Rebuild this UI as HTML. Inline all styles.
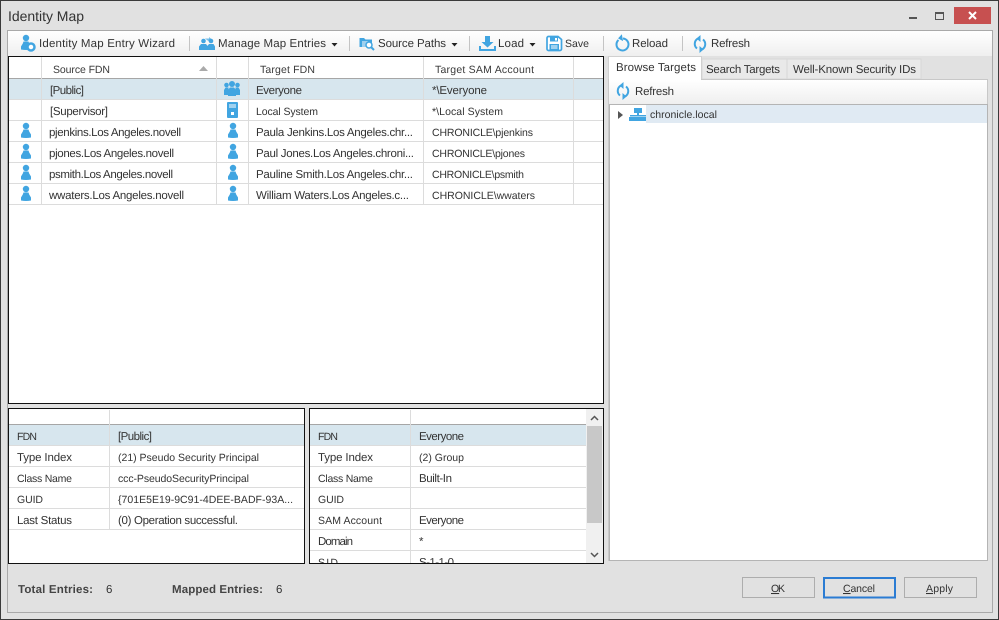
<!DOCTYPE html>
<html><head><meta charset="utf-8"><title>Identity Map</title>
<style>
html,body{margin:0;padding:0;background:#e1e1e1;overflow:hidden}
svg{display:block}
text{font-family:"Liberation Sans",sans-serif;font-size:11.5px;fill:#333;text-rendering:geometricPrecision}
text.s{font-size:10.5px}
.b{font-weight:bold;fill:#444}
.h{fill:#3a3a3a}
</style></head><body>
<svg width="999" height="620" viewBox="0 0 999 620" xmlns="http://www.w3.org/2000/svg">
<defs>
<linearGradient id="tb" x1="0" y1="0" x2="0" y2="1"><stop offset="0" stop-color="#fff"/><stop offset="1" stop-color="#efefef"/></linearGradient>
<symbol id="p" overflow="visible"><circle cx="0" cy="3" r="3.200" fill="#41a5e1"/><path d="M-2.500 6.500H2.500L3.200 8.500 5 11.500V14.500Q0 15.500-5 14.500V11.500L-3.200 8.500Z" fill="#41a5e1"/></symbol>
<symbol id="rf" overflow="visible"><path d="M3 1.500A6 6 0 0 0 2 11.500" fill="none" stroke="#41a5e1" stroke-width="2"/><path d="M5.500-2V5L1.500 1.500Z" fill="#41a5e1"/><path d="M7 12.500A6 6 0 0 0 8 2.500" fill="none" stroke="#41a5e1" stroke-width="2"/><path d="M4.500 16V9L8.500 12.500Z" fill="#41a5e1"/></symbol>
<clipPath id="c1"><rect x="310" y="409" width="276" height="154"/></clipPath>
</defs>
<rect width="999" height="620" fill="#e1e1e1"/>
<path d="M.5 620V.5H998.500V620" fill="none" stroke="#3a3a3a"/>
<path d="M0 619.500H999" stroke="#3a3a3a"/>
<text x="8" y="21" style="font-size:14px" textLength="76">Identity Map</text>
<rect x="909" y="17" width="8" height="2" fill="#555"/>
<rect x="935.500" y="12.500" width="8" height="7" fill="none" stroke="#555"/><rect x="935" y="12" width="9" height="2" fill="#555"/>
<rect x="954" y="7" width="37" height="17" fill="#c75050"/>
<path d="M969 12L976 19M976 12L969 19" stroke="#fff" stroke-width="2"/>
<rect x="7.500" y="30.500" width="985" height="582" fill="#e1e1e1" stroke="#a9a9a9"/>

<rect x="8" y="31" width="984" height="25" fill="url(#tb)"/>
<g stroke="#c4c4c4"><path d="M189.500 36V51M349.500 36V51M469.500 36V51M603.500 36V51M682.500 36V51"/></g>
<use href="#p" x="26" y="35"/>
<circle cx="31" cy="47" r="3.500" fill="#fff" stroke="#41a5e1" stroke-width="2.500"/>
<g fill="#41a5e1"><circle cx="203.500" cy="41" r="2.300"/><path d="M199 50V46.500L201 44H206L208 46.500V50Z"/><circle cx="211" cy="41" r="2.300"/><path d="M207 50V46.500L209 44H213.500L215 46.500V50Z"/><path d="M205 38.500H209V37L212 39.500 209 41.500Z" opacity=".7"/></g>
<path d="M331.500 43H337.500L334.500 46.500Z" fill="#222"/>
<path d="M359.500 38H364L365.500 39.500H372V47H359.500Z" fill="#41a5e1"/><path d="M362 41H368V47H362Z" fill="#9fd0ee"/>
<circle cx="369" cy="45" r="3" fill="#fff" stroke="#41a5e1" stroke-width="1.500"/><path d="M371 47L374 50" stroke="#41a5e1" stroke-width="2"/>
<path d="M451.500 43H457.500L454.500 46.500Z" fill="#222"/>
<path d="M485 36H490V42H493.500L487.500 47.500 481.500 42H485Z" fill="#41a5e1"/>
<path d="M479 46H481V49H494V46H496V51H479Z" fill="#41a5e1"/>
<path d="M529.500 43H535.500L532.500 46.500Z" fill="#222"/>
<path d="M548.500 36.500H558L561.500 39.500V49A1.500 1.500 0 0 1 560 50.500H548.500A1.500 1.500 0 0 1 547 49V38A1.500 1.500 0 0 1 548.500 36.500Z" fill="#fff" stroke="#41a5e1" stroke-width="1.700"/>
<path d="M550 37H558V41.500H550ZM549.500 44H559V50H549.500Z" fill="#41a5e1"/><rect x="555" y="38" width="2" height="2.500" fill="#fff"/><path d="M551 46H557.500M551 48H557.500" stroke="#fff"/>
<g transform="translate(-1.500 0)"><path d="M620 40A6 6 0 1 0 624.500 38.500" fill="none" stroke="#41a5e1" stroke-width="2"/><path d="M624 34.500V41.500L619.500 38Z" fill="#41a5e1" transform="rotate(-10 622 38)"/></g>
<use href="#rf" x="695" y="37"/>
<text x="39" y="47" textLength="136">Identity Map Entry Wizard</text>
<text x="218" y="47" textLength="108">Manage Map Entries</text>
<text x="378" y="47" textLength="68">Source Paths</text>
<text x="498" y="47" textLength="26">Load</text>
<text class="s" x="565" y="47" textLength="24">Save</text>
<text x="632" y="47" textLength="36">Reload</text>
<text x="711" y="47" textLength="39">Refresh</text>

<rect x="8.500" y="56.500" width="595" height="347" fill="#fff" stroke="#111"/>
<rect x="9" y="79" width="594" height="20" fill="#d7e6ee"/>
<path d="M9 78.500H603" stroke="#a6a6a6"/>
<g stroke="#dcdcdc"><path d="M9 99.500H603M9 120.500H603M9 141.500H603M9 162.500H603M9 183.500H603M9 204.500H603"/>
<path d="M41.500 57V205M216.500 57V205M248.500 57V205M423.500 57V205M573.500 57V205"/></g>
<path d="M199 71H208L203.500 66Z" fill="#aaa"/>
<text class="h s" x="53" y="73" textLength="57">Source FDN</text>
<text class="h s" x="260" y="73" textLength="55">Target FDN</text>
<text class="h s" x="435" y="73" textLength="99">Target SAM Account</text>
<text x="50" y="94" textLength="34">[Public]</text>
<text x="256" y="94" textLength="46">Everyone</text>
<text x="432" y="94" textLength="55">*\Everyone</text>
<text x="50" y="115" textLength="58">[Supervisor]</text>
<text class="s" x="256" y="115" textLength="62">Local System</text>
<text class="s" x="432" y="115" textLength="71">*\Local System</text>
<text x="49" y="136" textLength="132">pjenkins.Los Angeles.novell</text>
<text x="256" y="136" textLength="157">Paula Jenkins.Los Angeles.chr...</text>
<text class="s" x="432" y="136" textLength="101">CHRONICLE\pjenkins</text>
<text x="49" y="157" textLength="125">pjones.Los Angeles.novell</text>
<text x="256" y="157" textLength="158">Paul Jones.Los Angeles.chroni...</text>
<text class="s" x="432" y="157" textLength="93">CHRONICLE\pjones</text>
<text x="49" y="178" textLength="124">psmith.Los Angeles.novell</text>
<text x="256" y="178" textLength="157">Pauline Smith.Los Angeles.chr...</text>
<text class="s" x="432" y="178" textLength="92">CHRONICLE\psmith</text>
<text x="49" y="199" textLength="135">wwaters.Los Angeles.novell</text>
<text x="256" y="199" textLength="153">William Waters.Los Angeles.c...</text>
<text class="s" x="432" y="199" textLength="103">CHRONICLE\wwaters</text>
<g fill="#41a5e1"><circle cx="226.500" cy="85" r="2.300"/><circle cx="237.500" cy="85" r="2.300"/><path d="M224 95V90L225.500 87.500H228.500V95ZM240 95V90L238.500 87.500H235.500V95Z"/><circle cx="232" cy="84" r="3"/><path d="M228 96V90L230 87.500H234L236 90V96Z"/></g>
<rect x="227" y="102" width="11" height="16" rx="1" fill="#41a5e1"/><path d="M229 105H236M229 107H236" stroke="#fff"/><rect x="231" y="112" width="3" height="3" fill="#fff"/>
<use href="#p" x="26" y="123"/><use href="#p" x="26" y="144"/><use href="#p" x="26" y="165"/><use href="#p" x="26" y="186"/>
<use href="#p" x="233" y="123"/><use href="#p" x="233" y="144"/><use href="#p" x="233" y="165"/><use href="#p" x="233" y="186"/>

<rect x="8.500" y="408.500" width="296" height="155" fill="#fff" stroke="#111"/>
<rect x="9" y="425" width="295" height="20" fill="#d7e6ee"/>
<path d="M9 424.500H304" stroke="#a6a6a6"/>
<g stroke="#dcdcdc"><path d="M9 445.500H304M9 466.500H304M9 487.500H304M9 508.500H304M9 529.500H304M109.500 410V530"/></g>
<text class="s" x="17" y="440" textLength="20">FDN</text><text x="118" y="440" textLength="34">[Public]</text>
<text x="17" y="461" textLength="55">Type Index</text><text class="s" x="118" y="461" textLength="141">(21) Pseudo Security Principal</text>
<text class="s" x="17" y="482" textLength="55">Class Name</text><text class="s" x="118" y="482" textLength="131">ccc-PseudoSecurityPrincipal</text>
<text class="s" x="17" y="503" textLength="26">GUID</text><text class="s" x="118" y="503" textLength="175">{701E5E19-9C91-4DEE-BADF-93A...</text>
<text x="17" y="524" textLength="55">Last Status</text><text x="118" y="524" textLength="120">(0) Operation successful.</text>

<rect x="309.500" y="408.500" width="294" height="155" fill="#fff" stroke="#111"/>
<rect x="586" y="409" width="17" height="154" fill="#f0f0f0"/>
<rect x="587" y="426" width="15" height="97" fill="#c8c8c8"/>
<path d="M591 420L594.500 416.500 598 420M591 553L594.500 556.500 598 553" fill="none" stroke="#555" stroke-width="1.500"/>
<rect x="310" y="425" width="276" height="20" fill="#d7e6ee"/>
<path d="M310 424.500H586" stroke="#a6a6a6"/>
<g stroke="#dcdcdc"><path d="M310 445.500H586M310 466.500H586M310 487.500H586M310 508.500H586M310 529.500H586M310 550.500H586M410.500 410V563"/></g>
<g clip-path="url(#c1)">
<text class="s" x="318" y="440" textLength="20">FDN</text><text x="419" y="440" textLength="45">Everyone</text>
<text x="318" y="461" textLength="55">Type Index</text><text class="s" x="419" y="461" textLength="45">(2) Group</text>
<text class="s" x="318" y="482" textLength="55">Class Name</text><text x="419" y="482" textLength="33">Built-In</text>
<text class="s" x="318" y="503" textLength="26">GUID</text>
<text class="s" x="318" y="524" textLength="64">SAM Account</text><text x="419" y="524" textLength="45">Everyone</text>
<text x="318" y="545" textLength="35">Domain</text><text x="419" y="545" textLength="6">*</text>
<text class="s" x="318" y="566" textLength="20">SID</text><text x="419" y="566" textLength="35">S-1-1-0</text>
</g>

<rect x="702" y="59" width="85" height="20" fill="#e9e9e9" stroke="#d8d8d8"/>
<rect x="787" y="59" width="134" height="20" fill="#e9e9e9" stroke="#d8d8d8"/>
<rect x="608.500" y="79.500" width="379" height="481" fill="#fff" stroke="#c8c8c8"/>
<rect x="609" y="56" width="92" height="24" fill="#fff"/>
<path d="M608.500 79V56.500H701.500V79" fill="none" stroke="#d0d0d0"/>
<rect x="609" y="80" width="378" height="24" fill="url(#tb)"/>
<rect x="609.500" y="104.500" width="378" height="456" fill="#fff" stroke="#b4b4b4"/>
<rect x="646" y="105" width="341" height="18" fill="#e0eaf3"/>
<text x="616" y="71" textLength="80">Browse Targets</text>
<text x="706" y="73" textLength="74">Search Targets</text>
<text x="793" y="73" textLength="123">Well-Known Security IDs</text>
<use href="#rf" x="618" y="84"/>
<text x="635" y="95" textLength="39">Refresh</text>
<path d="M618 111L623 115 618 119Z" fill="#555"/>
<g fill="#41a5e1"><rect x="634" y="108" width="8" height="5"/><rect x="637" y="113" width="2" height="3"/><rect x="630" y="115" width="16" height="1.500"/><rect x="629" y="117" width="6" height="4"/><rect x="635" y="117" width="6" height="4"/><rect x="641" y="117" width="5" height="4"/></g>
<text class="s" x="650" y="118" textLength="67">chronicle.local</text>

<text class="b" x="18" y="593" textLength="75">Total Entries:</text><text x="106" y="593" textLength="5">6</text>
<text class="b" x="172" y="593" textLength="91">Mapped Entries:</text><text x="276" y="593" textLength="5">6</text>

<rect x="742.500" y="577.500" width="72" height="20" fill="#e1e1e1" stroke="#adadad"/>
<rect x="824" y="578" width="71" height="19.500" fill="#e1e1e1" stroke="#2b7cd3" stroke-width="2"/>
<rect x="904.500" y="577.500" width="72" height="20" fill="#e1e1e1" stroke="#adadad"/>
<text class="s" x="771" y="592" textLength="14"><tspan text-decoration="underline">O</tspan>K</text>
<text class="s" x="843" y="592" textLength="32"><tspan text-decoration="underline">C</tspan>ancel</text>
<text class="s" x="926" y="592" textLength="27"><tspan text-decoration="underline">A</tspan>pply</text>
</svg>
</body></html>
